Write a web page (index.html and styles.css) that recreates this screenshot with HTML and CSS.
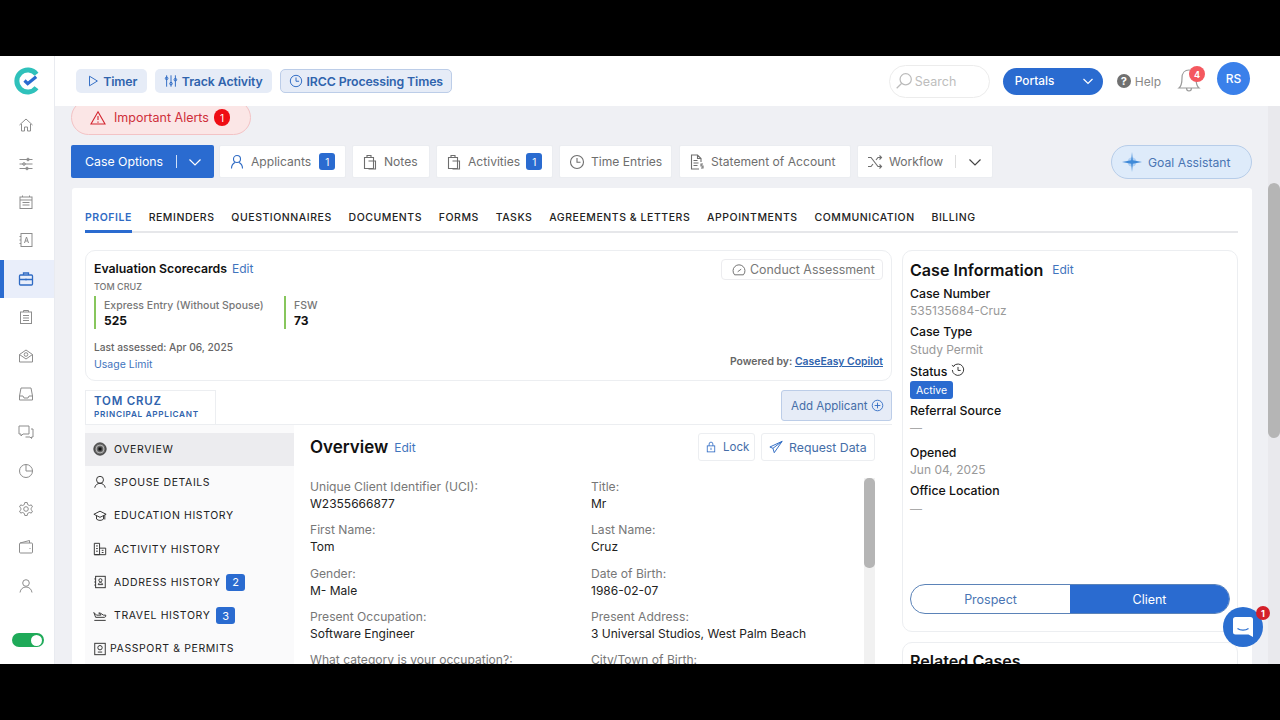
FILE: index.html
```html
<!DOCTYPE html>
<html lang="en">
<head>
<meta charset="utf-8">
<title>CaseEasy</title>
<link rel="stylesheet" href="styles.css">
</head>
<body>
<div class="frame">
  <aside class="sidebar">
    <div class="logo"><svg width="28" height="28" viewBox="0 0 28 28"><path d="M22.5 7.2A11 11 0 1 0 22.5 20.8" fill="none" stroke="#2fc1bb" stroke-width="5"/><path d="M10.5 13.5l3.2 3.2 8.5-7" fill="none" stroke="#2a6bd0" stroke-width="3.2"/></svg></div>
    <a class="side-item"><svg class="si" viewBox="0 0 16 16"><path d="M1.500 8L8 2l6.500 6M3.500 7v7h3v-4h3v4h3V7"/></svg></a>
    <a class="side-item"><svg class="si" viewBox="0 0 16 16"><path d="M1.500 3.500h13M1.500 8h13M1.500 12.500h13"/><circle cx="10" cy="3.500" r="1.300"/><circle cx="6" cy="8" r="1.300"/><circle cx="9" cy="12.500" r="1.300"/></svg></a>
    <a class="side-item"><svg class="si" viewBox="0 0 16 16"><rect x="2" y="3" width="12" height="11.500"/><path d="M2 6h12M4.500 1.500V3M11.500 1.500V3M4.500 8.500h7M4.500 11h7"/></svg></a>
    <a class="side-item"><svg class="si" viewBox="0 0 16 16"><rect x="3" y="1.500" width="11" height="13"/><path d="M1.500 4.500H3M1.500 8H3M1.500 11.500H3M6.500 11l2-6 2 6M7.300 9h2.400"/></svg></a>
    <a class="side-item active"><svg class="si" viewBox="0 0 16 16"><rect x="1.500" y="4" width="13" height="10" rx="1"/><path d="M5.500 4V2h5v2M1.500 8.500h13M8 7.500v2"/></svg></a>
    <a class="side-item"><svg class="si" viewBox="0 0 16 16"><rect x="2.500" y="3" width="11" height="11.500"/><path d="M5.500 3V1.500h5V3M5 6.500h6M5 9h6M5 11.500h6"/></svg></a>
    <a class="side-item"><svg class="si" viewBox="0 0 16 16"><path d="M1.500 6.500V14h13V6.500L8 2zM1.500 6.500L8 11l6.500-4.500"/><circle cx="8" cy="6.500" r="1.800"/></svg></a>
    <a class="side-item"><svg class="si" viewBox="0 0 16 16"><path d="M3 2h10l1.500 8v4h-13v-4zM1.500 10H5l1 2h4l1-2h3.500"/></svg></a>
    <a class="side-item"><svg class="si" viewBox="0 0 16 16"><path d="M1 2h10v8H5l-2 2v-2H1zM13 5h2v8h-1.500v1.500L12 13H7.500"/></svg></a>
    <a class="side-item"><svg class="si" viewBox="0 0 16 16"><circle cx="8" cy="8" r="6.500"/><path d="M8 1.500V8h6.500"/></svg></a>
    <a class="side-item"><svg class="si" viewBox="0 0 16 16"><circle cx="8" cy="8" r="2.300"/><path d="M6.800 1.500h2.400l.4 2 1.700 1 2-.6 1.200 2-1.500 1.400v1.400l1.500 1.400-1.200 2-2-.6-1.700 1-.4 2H6.800l-.4-2-1.700-1-2 .6-1.200-2 1.500-1.400V7.300L1.500 5.900l1.200-2 2 .6 1.700-1z"/></svg></a>
    <a class="side-item"><svg class="si" viewBox="0 0 16 16"><rect x="1.500" y="4" width="13" height="10" rx="1"/><path d="M2 4l9.500-2.500V4M11.500 9.500h1"/></svg></a>
    <a class="side-item"><svg class="si" viewBox="0 0 16 16"><circle cx="8" cy="5" r="3.300"/><path d="M2 14.500c.5-3.500 3-5.500 6-5.500s5.500 2 6 5.500"/></svg></a>
    <div class="switch"><span class="knob"></span></div>
  </aside>
  <div class="main">
    <header class="topbar">
      <a class="tbtn tb-timer"><svg class="ic blue" viewBox="0 0 16 16"><path d="M4 2.500l9 5.500-9 5.500z"/></svg>Timer</a>
      <a class="tbtn tb-track"><svg class="ic blue" viewBox="0 0 16 16"><path d="M3 1.500v13M8 1.500v13M13 1.500v13"/><circle cx="3" cy="5" r="1.500"/><circle cx="8" cy="11" r="1.500"/><circle cx="13" cy="6.500" r="1.500"/></svg>Track Activity</a>
      <a class="tbtn tb-ircc"><svg class="ic blue" viewBox="0 0 16 16"><circle cx="8" cy="8" r="6.500"/><path d="M8 4v4.300h3.500"/></svg>IRCC Processing Times</a>
      <div class="search"><svg class="ic lightg" viewBox="0 0 16 16"><circle cx="9.500" cy="6.500" r="5"/><path d="M6 10l-4.500 4.500"/></svg><span>Search</span></div>
      <a class="portals"><span>Portals</span><svg class="chev" viewBox="0 0 12 12"><path d="M1.500 4L6 8.500 10.500 4"/></svg></a>
      <a class="help"><span class="qm">?</span>Help</a>
      <div class="bell"><svg width="24" height="26" viewBox="0 0 24 26"><path d="M2 20c2.500-2 3-5 3-10 0-5 3-8 7-8s7 3 7 8c0 5 .5 8 3 10zM9.500 20c0 4 5 4 5 0" fill="none" stroke="#9a9a9a" stroke-width="1.200"/></svg><span class="bell-badge">4</span></div>
      <div class="avatar">RS</div>
    </header>
    <div class="body">
      <div class="content">
        <a class="alerts"><svg class="ic red" viewBox="0 0 16 16"><path d="M8 1.800L15 14H1zM8 6v4M8 11.500v1.200"/></svg><span>Important Alerts</span><b class="alert-count">1</b></a>
        <nav class="actions">
          <a class="case-options"><span>Case Options</span><i class="sep"></i><svg class="chev" viewBox="0 0 12 12"><path d="M.5 3.500L6 9l5.500-5.500"/></svg></a>
          <a class="act act-applicants"><svg class="ic blue" viewBox="0 0 16 16"><circle cx="8" cy="5" r="3.500"/><path d="M2.500 14.500c0-3 1.500-5 3.500-6M13.500 14.500c0-3-1.500-5-3.500-6"/></svg><span>Applicants</span><b class="count">1</b></a>
          <a class="act act-notes"><svg class="ic grey" viewBox="0 0 16 16"><path d="M2.500 3.500h9v11h-9zM5 3.500V1.500h4v2M6.500 7h7v8h-7"/></svg><span>Notes</span></a>
          <a class="act act-activities"><svg class="ic grey" viewBox="0 0 16 16"><path d="M2.500 3.500h9v11h-9zM5 3.500V1.500h4v2M6.500 7h7v8h-7"/></svg><span>Activities</span><b class="count">1</b></a>
          <a class="act act-time"><svg class="ic grey" viewBox="0 0 16 16"><circle cx="8" cy="8" r="6.500"/><path d="M8 4v4.300h3.500"/></svg><span>Time Entries</span></a>
          <a class="act act-statement"><svg class="ic grey" viewBox="0 0 16 16"><path d="M10 15H2.500V1h6l3.500 3.500V8M8.500 1v3.500H12M4.500 6.500h4M4.500 9h5M4.500 11.500h4M14 10h-2v2h2v2h-2"/></svg><span>Statement of Account</span></a>
          <a class="act act-workflow"><svg class="ic grey" viewBox="0 0 16 16"><path d="M1 3.500h3l7 9h3M1 12.500h3l2-2.500M9 6l2-2.500h3M12.500 1.500l2 2-2 2M12.500 10.500l2 2-2 2"/></svg><span>Workflow</span><i class="sep grey-sep"></i><svg class="chev dark" viewBox="0 0 12 12"><path d="M.5 3.500L6 9l5.500-5.500"/></svg></a>
          <a class="goal"><svg width="20" height="20" viewBox="0 0 20 20"><circle cx="10" cy="10" r="4.500" fill="#8fbdee" opacity=".6"/><path d="M10 0l.8 8.200L20 10l-9.200 1.800L10 20l-.8-8.200L0 10l9.200-1.800z" fill="#3f8ad8"/></svg><span>Goal Assistant</span></a>
        </nav>
        <section class="card">
          <div class="tabs">
            <a class="tab on">PROFILE</a><a class="tab">REMINDERS</a><a class="tab">QUESTIONNAIRES</a><a class="tab">DOCUMENTS</a><a class="tab">FORMS</a><a class="tab">TASKS</a><a class="tab">AGREEMENTS &amp; LETTERS</a><a class="tab">APPOINTMENTS</a><a class="tab">COMMUNICATION</a><a class="tab">BILLING</a>
          </div>
          <div class="cols">
            <div class="left">
              <div class="eval">
                <div class="eval-main">
                  <div class="eval-title"><strong>Evaluation Scorecards</strong><a class="link">Edit</a></div>
                  <div class="eval-name">TOM CRUZ</div>
                  <div class="scores">
                    <div class="score score-a"><span>Express Entry (Without Spouse)</span><b>525</b></div>
                    <div class="score"><span>FSW</span><b>73</b></div>
                  </div>
                  <div class="assessed">Last assessed: Apr 06, 2025</div>
                  <a class="link usage">Usage Limit</a>
                </div>
                <div class="eval-side">
                  <a class="conduct"><svg class="ic grey" viewBox="0 0 16 16"><path d="M3 13.500a6.800 6.800 0 1 1 10 0zM6.500 10l4-3"/></svg>Conduct Assessment</a>
                  <div class="powered">Powered by: <a>CaseEasy Copilot</a></div>
                </div>
              </div>
              <div class="applicant-row">
                <div class="applicant-tab"><b>TOM CRUZ</b><span>PRINCIPAL APPLICANT</span></div>
                <a class="add-applicant">Add Applicant<svg class="ic blue" viewBox="0 0 16 16"><circle cx="8" cy="8" r="6.500"/><path d="M8 4.500v7M4.500 8h7"/></svg></a>
              </div>
              <div class="panel">
                <ul class="pnav">
                  <li class="on"><svg class="ic dark" viewBox="0 0 16 16"><circle cx="8" cy="8" r="7" fill="#666"/><circle cx="8" cy="8" r="4.500" fill="none" stroke="#ddd" stroke-width=".8"/><circle cx="8" cy="8" r="2" fill="#111"/></svg>OVERVIEW</li>
                  <li><svg class="ic dark" viewBox="0 0 16 16"><circle cx="8" cy="5.500" r="4"/><path d="M2 14.500c.5-3 3-5 6-5s5.500 2 6 5"/></svg>SPOUSE DETAILS</li>
                  <li><svg class="ic dark" viewBox="0 0 16 16"><path d="M1 6l7-3.500L15 6 8 9.500zM4 8v3.500c2 2 6 2 8 0V8M13.500 7v5"/></svg>EDUCATION HISTORY</li>
                  <li><svg class="ic dark" viewBox="0 0 16 16"><path d="M1.500 14.500v-13h6v13zM7.500 7h7v7.500h-13M3.500 4.500h2M3.500 7.500h2M3.500 10.500h2M10 9.500h2M10 12h2"/></svg>ACTIVITY HISTORY</li>
                  <li><svg class="ic dark" viewBox="0 0 16 16"><rect x="3" y="1.500" width="11" height="13"/><path d="M1.500 4.500H3M1.500 8H3M1.500 11.500H3M6 11c0-3 5-3 5 0z"/><circle cx="8.500" cy="6" r="1.800"/></svg>ADDRESS HISTORY<b class="count big">2</b></li>
                  <li><svg class="ic dark" viewBox="0 0 16 16"><path d="M1 4l3 3h5L6.500 4.500H8L12 7h2.500c.5 1.500-.5 2.500-1.500 2.500H3zM1.500 13h13"/></svg>TRAVEL HISTORY<b class="count big">3</b></li>
                  <li class="tight"><svg class="ic dark" viewBox="0 0 16 16"><rect x="2" y="1.500" width="12" height="13"/><circle cx="8" cy="6.500" r="2.500"/><path d="M5.500 11.500h5"/></svg>PASSPORT &amp; PERMITS</li>
                </ul>
                <div class="overview">
                  <div class="ov-head">
                    <h2>Overview</h2><a class="link">Edit</a>
                    <a class="ov-btn ov-lock"><svg class="ic blue" viewBox="0 0 16 16"><rect x="3" y="6.500" width="10" height="8"/><path d="M5.500 6.500V4a2.500 2.500 0 0 1 5 0v2.500M8 9v3"/></svg>Lock</a>
                    <a class="ov-btn ov-request"><svg class="ic blue" viewBox="0 0 16 16"><path d="M15 1.500L1 8l3.500 1.500L6 14.500zM15 1.500L4.500 9.500"/></svg>Request Data</a>
                  </div>
                  <div class="fields-wrap">
                    <dl class="fields">
                      <div><dt>Unique Client Identifier (UCI):</dt><dd>W2355666877</dd></div>
                      <div><dt>Title:</dt><dd>Mr</dd></div>
                      <div><dt>First Name:</dt><dd>Tom</dd></div>
                      <div><dt>Last Name:</dt><dd>Cruz</dd></div>
                      <div><dt>Gender:</dt><dd>M- Male</dd></div>
                      <div><dt>Date of Birth:</dt><dd>1986-02-07</dd></div>
                      <div><dt>Present Occupation:</dt><dd>Software Engineer</dd></div>
                      <div><dt>Present Address:</dt><dd>3 Universal Studios, West Palm Beach</dd></div>
                      <div><dt>What category is your occupation?:</dt><dd>&nbsp;</dd></div>
                      <div><dt>City/Town of Birth:</dt><dd>&nbsp;</dd></div>
                    </dl>
                    <div class="mini-track"><span class="mini-thumb"></span></div>
                  </div>
                </div>
              </div>
            </div>
            <div class="right">
              <div class="info">
                <div class="info-title"><h2>Case Information</h2><a class="link">Edit</a></div>
                <div class="info-label">Case Number</div>
                <div class="info-val">535135684-Cruz</div>
                <div class="info-label">Case Type</div>
                <div class="info-val">Study Permit</div>
                <div class="info-label status">Status <svg class="ic dark" viewBox="0 0 16 16"><path d="M3 3.500a6.500 6.500 0 1 1-1.500 4.500M1 2.500l2 1.500 1.500-2M8 4.500v4h3"/></svg></div>
                <span class="active-tag">Active</span>
                <div class="info-label">Referral Source</div>
                <div class="info-val dash">—</div>
                <div class="info-label">Opened</div>
                <div class="info-val">Jun 04, 2025</div>
                <div class="info-label">Office Location</div>
                <div class="info-val dash">—</div>
                <div class="seg"><a>Prospect</a><a class="on">Client</a></div>
              </div>
              <div class="related"><h2>Related Cases</h2></div>
            </div>
          </div>
        </section>
      </div>
      <div class="vscroll"><span class="vthumb"></span></div>
    </div>
  </div>
  <a class="chat"><svg width="22" height="22" viewBox="0 0 22 22"><path d="M3.500 1h15A2.500 2.500 0 0 1 21 3.500V21l-4.500-2.500h-13A2.500 2.500 0 0 1 1 16V3.500A2.500 2.500 0 0 1 3.500 1z" fill="#fff"/><path d="M5.500 12.500c3 2.200 8 2.200 11 0" fill="none" stroke="#2b6fd1" stroke-width="1.300"/></svg><b class="chat-badge">1</b></a>
</div>
</body>
</html>
```
FILE: styles.css
```css
* { box-sizing: border-box; }
html, body { margin: 0; height: 100%; background: #000; overflow: hidden; }
body { padding-top: 56px; font-family: Inter, "Noto Sans", "Liberation Sans", sans-serif; color: #111; }
a { text-decoration: none; color: inherit; }
h2, ul, dl, dd { margin: 0; padding: 0; }
ul { list-style: none; }
svg { display: block; flex: none; }

.frame { position: relative; display: flex; width: 1280px; height: 608px; overflow: hidden; background: #eff0f4; }

.ic { width: 14px; height: 14px; fill: none; stroke: #777; stroke-width: 1.100; }
.ic.blue { stroke: #2f6bc4; }
.ic.grey { stroke: #6e6e6e; }
.ic.dark { stroke: #333; }
.ic.red { stroke: #d3242f; width: 16px; height: 16px; }
.ic.lightg { stroke: #bbb; width: 18px; height: 18px; }
.chev { width: 12px; height: 12px; fill: none; stroke: #fff; stroke-width: 1.200; }
.chev.dark { stroke: #444; }

.sidebar { flex: none; width: 55px; background: #fff; border-right: 1px solid #e9ebf0; display: flex; flex-direction: column; align-items: stretch; padding-top: 11px; }
.logo { height: 29px; display: flex; justify-content: center; margin-bottom: 10px; margin-left: 1px; }
.side-item { height: 38.400px; display: flex; align-items: center; justify-content: center; border-left: 4px solid transparent; padding-right: 6px; }
.si { width: 16px; height: 16px; fill: none; stroke: #8d8d8d; stroke-width: 1; }
.side-item.active { background: #e9eefa; border-left-color: #2a6bd0; }
.side-item.active .si { stroke: #2f6bc4; stroke-width: 1.300; }
.switch { width: 32px; height: 14px; margin: 28px 0 0 12px; border-radius: 7px; background: #1faa59; display: flex; justify-content: flex-end; padding: 1.500px 2px; }
.knob { width: 11px; height: 11px; border-radius: 50%; background: #fff; }

.main { flex: 1; min-width: 0; display: flex; flex-direction: column; }
.topbar { position: relative; z-index: 2; flex: none; height: 50px; background: #fff; display: flex; align-items: center; padding: 0 30px 0 21px; }
.tbtn { height: 24px; display: flex; align-items: center; justify-content: center; gap: 3.500px; margin-right: 8px; border-radius: 5px; background: #e6ecf7; color: #2f63ad; font-size: 12.300px; font-weight: 600; letter-spacing: -.1px; }
.tb-timer { width: 71px; }
.tb-track { width: 117px; }
.tb-ircc { width: 172px; border: 1px solid #bccde8; }
.search { height: 33px; width: 101px; margin-left: auto; display: flex; align-items: center; gap: 2px; padding-left: 5px; border: 1px solid #ececec; border-radius: 17px; color: #bdbdbd; font-size: 12.500px; }
.portals { width: 100px; height: 27px; margin-left: 13px; border-radius: 14px; background: #2a6bd0; color: #fff; font-size: 11.800px; font-weight: 500; display: flex; align-items: center; justify-content: space-between; padding: 0 9px 0 12px; }
.help { margin-left: 14px; display: flex; align-items: center; gap: 4px; color: #888; font-size: 12px; }
.qm { width: 14px; height: 14px; border-radius: 50%; background: #707070; color: #fff; font-size: 11px; font-weight: 700; display: flex; align-items: center; justify-content: center; }
.bell { position: relative; margin-left: 16px; }
.bell-badge { position: absolute; left: 12px; top: -2px; width: 16px; height: 16px; border-radius: 50%; background: #f4585f; color: #fff; font-size: 9px; font-weight: 700; display: flex; align-items: center; justify-content: center; }
.avatar { width: 33px; height: 33px; margin-left: 16px; margin-top: -5px; border-radius: 50%; background: #3a80ea; color: #fff; font-size: 12px; font-weight: 500; display: flex; align-items: center; justify-content: center; }

.body { flex: 1; min-height: 0; display: flex; }
.content { flex: 1; min-width: 0; overflow: hidden; padding: 0 16px; }
.vscroll { flex: none; width: 12px; background: #e9e9ed; padding-top: 77px; }
.vthumb { display: block; height: 255px; background: #b5b5b5; border-radius: 6px; }

.alerts { width: 180px; height: 35px; margin-top: -6px; display: flex; align-items: center; gap: 8px; padding-left: 18px; border: 1px solid #f3c3c5; border-radius: 18px; background: #fbe6e6; color: #cf2f3a; font-size: 12.500px; }
.alert-count { width: 16px; height: 17px; margin-left: -3px; border-radius: 8px; background: #ef0d14; color: #fff; font-size: 10px; font-weight: 400; display: flex; align-items: center; justify-content: center; }

.actions { display: flex; align-items: flex-start; margin-top: 10px; height: 34px; }
.case-options { width: 143px; height: 33px; background: #2a6bd0; color: #fff; border-radius: 2px; font-size: 12.300px; display: flex; align-items: center; padding-left: 14px; margin-right: 5px; }
.sep { width: 1px; height: 13px; background: #cfe0f8; margin: 0 12px 0 13px; }
.act { height: 33px; background: #fff; border: 1px solid #ebedf1; border-radius: 2px; display: flex; align-items: center; gap: 6px; padding-left: 9px; color: #6e6e6e; font-size: 12.100px; margin-right: 6px; }
.act .ic { width: 16px; height: 16px; }
.act-applicants { width: 127px; }
.act-applicants .count { margin-left: 2px; }
.act-notes { width: 78px; }
.act-activities { width: 117px; }
.act-time { width: 113px; margin-right: 7px; }
.act-statement { width: 172px; }
.act-workflow { width: 136px; margin-right: 0; }
.act-workflow .sep { margin: 0 7px 0 6px; }
.grey-sep { background: #ddd; }
.count { min-width: 16px; height: 17px; border-radius: 3px; background: #2a6bd0; color: #fff; font-size: 10px; font-weight: 400; display: inline-flex; align-items: center; justify-content: center; }
.goal { width: 141px; height: 34px; margin-left: auto; border: 1px solid #b7cde9; border-radius: 17px; background: #deebfa; color: #4a75b3; font-size: 12.200px; display: flex; align-items: center; gap: 6px; padding-left: 10px; }

.card { width: 1180px; margin: 9px 0 0 1px; padding: 17px 14px 0 13px; background: #fff; border-radius: 3px; }
.tabs { display: flex; gap: 16.800px; height: 28px; border-bottom: 2px solid #e6e7ea; }
.tab { font-size: 10.500px; font-weight: 500; letter-spacing: .54px; line-height: 26px; height: 28px; color: #222; }
.tab.on { color: #2f6bc4; font-weight: 600; border-bottom: 3px solid #2a6bd0; }

.cols { display: grid; grid-template-columns: 807px 336px; gap: 10px; margin-top: 17px; }
.left, .right { min-width: 0; }
.link { color: #3f74bd; font-size: 12px; }

.eval { height: 131px; border: 1px solid #eceef1; border-radius: 10px; padding: 9px 8px 8px; display: flex; justify-content: space-between; }
.eval-title { display: flex; align-items: center; gap: 5px; height: 17px; }
.eval-title strong { font-size: 12.300px; font-weight: 600; }
.eval-name { margin-top: 3px; font-size: 9px; font-weight: 500; color: #777; line-height: 14px; }
.scores { display: flex; margin-top: 2px; }
.score { border-left: 2.500px solid #87c65c; height: 33px; padding-left: 8px; display: flex; flex-direction: column; justify-content: center; }
.score-a { width: 190px; }
.score span { font-size: 10.500px; font-weight: 500; color: #777; white-space: nowrap; line-height: 15px; }
.score b { font-size: 12px; font-weight: 700; line-height: 15px; }
.assessed { margin-top: 11px; font-size: 10.200px; font-weight: 500; color: #666; line-height: 14px; }
.usage { display: block; margin-top: 4px; font-size: 10.500px; line-height: 14px; }
.eval-side { display: flex; flex-direction: column; align-items: flex-end; justify-content: space-between; }
.conduct { width: 162px; height: 21px; margin-top: -1px; border: 1px solid #ececef; border-radius: 4px; display: flex; align-items: center; gap: 4px; padding-left: 10px; color: #777; font-size: 12.400px; }
.powered { font-size: 10.400px; font-weight: 600; color: #666; margin-bottom: 4px; }
.powered a { color: #2f63ad; text-decoration: underline; }

.applicant-row { display: flex; justify-content: space-between; margin-top: 9px; height: 34px; }
.applicant-tab { width: 131px; height: 34px; border: 1px solid #eceef1; border-bottom: 0; padding: 3px 0 0 8px; display: flex; flex-direction: column; color: #2f63ad; }
.applicant-tab b { font-size: 11.500px; font-weight: 600; letter-spacing: .8px; line-height: 15px; }
.applicant-tab span { font-size: 8.200px; font-weight: 600; letter-spacing: .7px; line-height: 11px; }
.add-applicant { width: 111px; height: 31px; border: 1px solid #bccde8; border-radius: 3px; background: #e6ecf7; color: #456ea8; font-size: 11.500px; display: flex; align-items: center; gap: 3px; padding-left: 9px; }
.add-applicant .ic { width: 13px; height: 13px; }

.panel { display: flex; border-top: 1px solid #eceef1; height: 260px; }
.pnav { flex: none; width: 209px; padding-top: 8px; background: #fafafb; }
.pnav li { height: 33.300px; display: flex; align-items: center; gap: 7px; padding: 0 0 1px 8px; font-size: 10.500px; font-weight: 400; letter-spacing: .6px; color: #222; }
.pnav li.on { background: #ececef; }
.pnav li.tight { gap: 3px; }
.count.big { min-width: 19px; height: 17px; margin-left: -1px; font-size: 11px; }
.overview { flex: 1; min-width: 0; padding: 8px 17px 0 16px; }
.ov-head { display: flex; align-items: center; height: 28px; gap: 6px; }
.ov-head h2 { font-size: 17px; font-weight: 600; }
.ov-btn { height: 28px; display: flex; align-items: center; gap: 6px; padding: 0 6px; border: 1px solid #eceef1; border-radius: 3px; color: #456ea8; font-size: 12.300px; }
.ov-lock { margin-left: auto; width: 57px; font-size: 11.500px; }
.ov-lock .ic { width: 12px; height: 12px; }
.ov-request { width: 114px; padding-left: 7px; }
.fields-wrap { display: flex; margin-top: 17px; }
.fields { flex: 1; display: grid; grid-template-columns: 281px 1fr; grid-auto-rows: 43.300px; }
.fields dt { font-size: 12.100px; color: #777; line-height: 17px; }
.fields dd { font-size: 12px; color: #222; line-height: 17px; }
.mini-track { flex: none; width: 11px; height: 186px; background: #f1f1f1; }
.mini-thumb { display: block; height: 90px; border-radius: 5px; background: #b5b5b5; }

.info { height: 382px; border: 1px solid #eceef1; border-radius: 10px; padding: 8px 8px 17px 7px; display: flex; flex-direction: column; align-items: flex-start; }
.info-title { display: flex; align-items: center; gap: 9px; height: 21px; margin-bottom: 3px; }
.info-title h2 { font-size: 16.100px; font-weight: 600; }
.info-label { font-size: 12.300px; font-weight: 500; line-height: 17.500px; margin-top: 1.500px; display: flex; gap: 4px; }
.info-val { font-size: 12px; color: #999; line-height: 17.500px; margin-bottom: 2px; }
.info-val.dash { height: 21px; color: #aaa; }
.status { height: 17.500px; margin-top: 2.500px; }
.active-tag { margin: 1px 0 1px; height: 18px; width: 43px; border-radius: 3px; background: #2a6bd0; color: #fff; font-size: 10.500px; display: flex; align-items: center; justify-content: center; }
.seg { margin-top: auto; width: 320px; height: 30px; display: flex; border: 1px solid #5b83b8; border-radius: 15px; overflow: hidden; font-size: 12.500px; }
.seg a { width: 50%; display: flex; align-items: center; justify-content: center; color: #4a75b3; }
.seg a.on { background: #2a6bd0; color: #fff; }
.related { margin-top: 10px; height: 60px; border: 1px solid #eceef1; border-radius: 10px; padding: 8px 8px 8px 7px; }
.related h2 { font-size: 16.100px; font-weight: 600; }

.chat { position: absolute; left: 1223px; top: 551px; width: 40px; height: 40px; border-radius: 50%; background: #2b6fd1; display: flex; align-items: center; justify-content: center; }
.chat-badge { position: absolute; right: -7px; top: -1px; width: 14px; height: 14px; border-radius: 50%; background: #d4202a; color: #fff; font-size: 9px; font-weight: 700; display: flex; align-items: center; justify-content: center; }
```
